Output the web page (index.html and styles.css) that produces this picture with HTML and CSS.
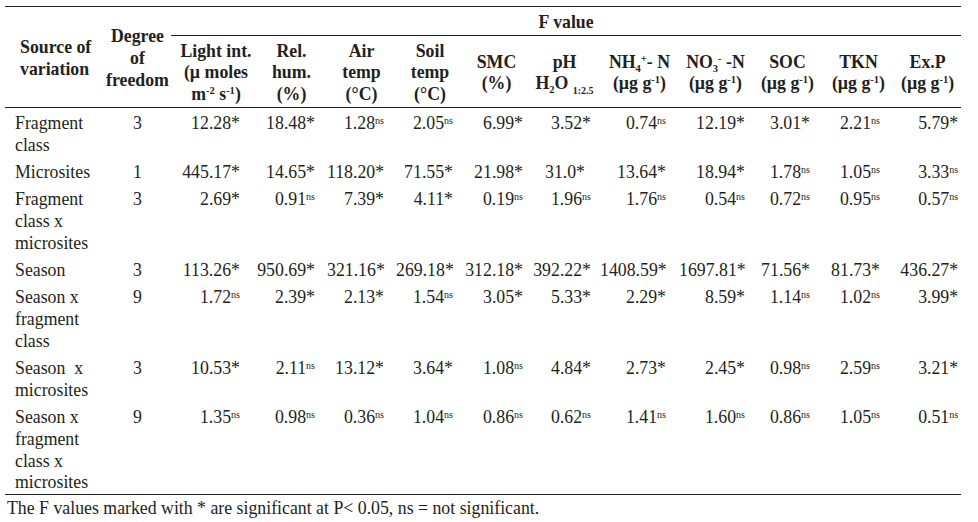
FILE: index.html
```html
<!DOCTYPE html>
<html lang="en">
<head>
<meta charset="utf-8">
<title>F values</title>
<link rel="stylesheet" href="styles.css">
</head>
<body>
<div class="page">
<table class="anova">
<colgroup>
<col class="c-src"><col class="c-df"><col class="c-li"><col class="c-rh"><col class="c-at"><col class="c-st"><col class="c-smc"><col class="c-ph"><col class="c-nh"><col class="c-no"><col class="c-soc"><col class="c-tkn"><col class="c-exp">
</colgroup>
<thead>
<tr>
<th rowspan="2" class="h-src">Source of<br>variation</th>
<th rowspan="2" class="h-df">Degree<br>of<br>freedom</th>
<th colspan="11" class="h-f">F value</th>
</tr>
<tr class="sub-head">
<th class="h-li">Light int.<br>(µ moles<br>m<sup>-2</sup> s<sup>-1</sup>)</th>
<th>Rel.<br>hum.<br>(%)</th>
<th>Air<br>temp<br>(°C)</th>
<th>Soil<br>temp<br>(°C)</th>
<th>SMC<br>(%)</th>
<th>pH<br>H<sub>2</sub>O <sub class="ratio">1:2.5</sub></th>
<th>NH<sub>4</sub><sup>+</sup>- N<br>(µg g<sup>-1</sup>)</th>
<th>NO<sub>3</sub><sup>-</sup> -N<br>(µg g<sup>-1</sup>)</th>
<th>SOC<br>(µg g<sup>-1</sup>)</th>
<th>TKN<br>(µg g<sup>-1</sup>)</th>
<th>Ex.P<br>(µg g<sup>-1</sup>)</th>
</tr>
</thead>
<tbody>
<tr>
<td>Fragment<br>class</td><td>3</td>
<td>12.28*</td><td>18.48*</td><td>1.28<sup class="ns">ns</sup></td><td>2.05<sup class="ns">ns</sup></td><td>6.99*</td><td>3.52*</td><td>0.74<sup class="ns">ns</sup></td><td>12.19*</td><td>3.01*</td><td>2.21<sup class="ns">ns</sup></td><td>5.79*</td>
</tr>
<tr>
<td>Microsites</td><td>1</td>
<td>445.17*</td><td>14.65*</td><td>118.20*</td><td>71.55*</td><td>21.98*</td><td class="shift">31.0*</td><td>13.64*</td><td>18.94*</td><td>1.78<sup class="ns">ns</sup></td><td>1.05<sup class="ns">ns</sup></td><td>3.33<sup class="ns">ns</sup></td>
</tr>
<tr>
<td>Fragment<br>class x<br>microsites</td><td>3</td>
<td>2.69*</td><td>0.91<sup class="ns">ns</sup></td><td>7.39*</td><td>4.11*</td><td>0.19<sup class="ns">ns</sup></td><td>1.96<sup class="ns">ns</sup></td><td>1.76<sup class="ns">ns</sup></td><td>0.54<sup class="ns">ns</sup></td><td>0.72<sup class="ns">ns</sup></td><td>0.95<sup class="ns">ns</sup></td><td>0.57<sup class="ns">ns</sup></td>
</tr>
<tr>
<td>Season</td><td>3</td>
<td>113.26*</td><td>950.69*</td><td>321.16*</td><td>269.18*</td><td>312.18*</td><td>392.22*</td><td>1408.59*</td><td>1697.81*</td><td>71.56*</td><td>81.73*</td><td>436.27*</td>
</tr>
<tr>
<td>Season x<br>fragment<br>class</td><td>9</td>
<td>1.72<sup class="ns">ns</sup></td><td>2.39*</td><td>2.13*</td><td>1.54<sup class="ns">ns</sup></td><td>3.05*</td><td>5.33*</td><td>2.29*</td><td>8.59*</td><td>1.14<sup class="ns">ns</sup></td><td>1.02<sup class="ns">ns</sup></td><td>3.99*</td>
</tr>
<tr>
<td>Season&nbsp; x<br>microsites</td><td>3</td>
<td>10.53*</td><td>2.11<sup class="ns">ns</sup></td><td>13.12*</td><td>3.64*</td><td>1.08<sup class="ns">ns</sup></td><td>4.84*</td><td>2.73*</td><td>2.45*</td><td>0.98<sup class="ns">ns</sup></td><td>2.59<sup class="ns">ns</sup></td><td>3.21*</td>
</tr>
<tr class="last">
<td>Season x<br>fragment<br>class x<br>microsites</td><td>9</td>
<td>1.35<sup class="ns">ns</sup></td><td>0.98<sup class="ns">ns</sup></td><td>0.36<sup class="ns">ns</sup></td><td>1.04<sup class="ns">ns</sup></td><td>0.86<sup class="ns">ns</sup></td><td>0.62<sup class="ns">ns</sup></td><td>1.41<sup class="ns">ns</sup></td><td>1.60<sup class="ns">ns</sup></td><td>0.86<sup class="ns">ns</sup></td><td>1.05<sup class="ns">ns</sup></td><td>0.51<sup class="ns">ns</sup></td>
</tr>
</tbody>
</table>
<p class="note">The F values marked with * are significant at P&lt; 0.05, ns = not significant.</p>
</div>
</body>
</html>
```

FILE: styles.css
```css
html, body {
  margin: 0;
  padding: 0;
  background: #ffffff;
}

body {
  font-family: "Liberation Serif", "Times New Roman", serif;
  font-size: 17.8px;
  line-height: 21.7px;
  color: #231f20;
}

.page {
  padding: 6px 0 0 5px;
  width: 956px;
}

.anova {
  border-collapse: collapse;
  table-layout: fixed;
  width: 956px;
  border-top: 1px solid #231f20;
}

.c-src { width: 99px; }
.c-df { width: 67px; }
.c-li { width: 85px; }
.c-rh { width: 71px; }
.c-at { width: 69px; }
.c-st { width: 68px; }
.c-smc { width: 65px; }
.c-ph { width: 71px; }
.c-nh { width: 79px; }
.c-no { width: 73px; }
.c-soc { width: 71px; }
.c-tkn { width: 71px; }
.c-exp { width: 67px; }

.anova th {
  font-weight: bold;
  text-align: center;
  vertical-align: middle;
  padding: 5px 0 1px;
  border-bottom: 1px solid #231f20;
  white-space: nowrap;
}

.anova th.h-src {
  text-align: left;
  padding-left: 15px;
}

.anova th.h-f {
  padding: 5px 0 1px;
}

.anova th.h-li {
  padding-left: 5px;
}

.anova sup,
.anova sub {
  font-size: 10.5px;
  line-height: 0;
}

.anova sup {
  vertical-align: 6px;
}

.anova sub {
  vertical-align: -4px;
}

.anova sub.ratio {
  font-size: 10px;
  vertical-align: -5px;
}

.anova td {
  padding: 5px 0 0.7px;
  vertical-align: top;
  text-align: right;
  white-space: nowrap;
}

.anova td:nth-child(1) {
  text-align: left;
  padding-left: 10px;
}

.anova td:nth-child(2) { text-align: center; }
.anova td:nth-child(3) { padding-right: 16px; }
.anova td:nth-child(4) { padding-right: 12px; }
.anova td:nth-child(5) { padding-right: 12px; }
.anova td:nth-child(6) { padding-right: 11px; }
.anova td:nth-child(7) { padding-right: 6px; }
.anova td:nth-child(8) { padding-right: 9px; }
.anova td:nth-child(9) { padding-right: 13px; }
.anova td:nth-child(10) { padding-right: 7px; }
.anova td:nth-child(11) { padding-right: 13px; }
.anova td:nth-child(12) { padding-right: 14px; }
.anova td:nth-child(13) { padding-right: 3px; }

.anova td.shift { padding-right: 15px; }

.anova sup.ns {
  font-size: 10px;
  vertical-align: 5px;
}

.anova tr.last td {
  padding-bottom: 0;
  border-bottom: 1px solid #231f20;
}

.note {
  margin: 3px 0 0 2px;
}
```
